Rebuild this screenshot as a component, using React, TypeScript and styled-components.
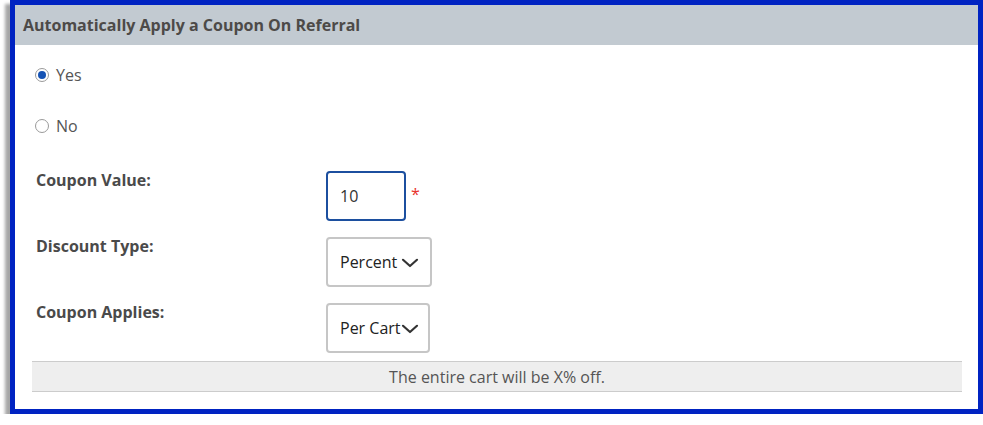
import React from 'react';
import styled, { createGlobalStyle } from 'styled-components';

const GlobalStyle = createGlobalStyle`
  html, body {
    margin: 0;
    padding: 0;
    background: #ffffff;
  }
  body {
    font-family: "Open Sans", "Noto Sans", Arial, sans-serif;
    color: #4a4a4a;
  }
`;

const Frame = styled.div`
  box-sizing: border-box;
  margin-left: 10px;
  width: 973px;
  height: 414px;
  border: 5px solid #0023c2;
  background: #ffffff;
  box-shadow: -5px 4px 3px rgba(0, 0, 0, 0.35);
  display: flex;
  flex-direction: column;
`;

const Header = styled.div`
  height: 40px;
  background: #c2cad1;
  display: flex;
  align-items: center;
  padding-left: 8px;
  font-size: 16px;
  font-weight: 700;
  color: #4d4a48;
`;

const Body = styled.div`
  display: flex;
  flex-direction: column;
  padding: 19px 16px 0 17px;
`;

const RadioRow = styled.label`
  display: flex;
  align-items: center;
  height: 22px;
  padding-left: 3px;
  margin-bottom: 29px;
  font-size: 16px;
  color: #555;
  cursor: pointer;
`;

const Radio = styled.input.attrs({ type: 'radio' })`
  appearance: none;
  box-sizing: border-box;
  width: 14px;
  height: 14px;
  margin: 0 7px 0 0;
  border-radius: 50%;
  border: 1px solid #9a9a9a;
  background: #fff;
  display: grid;
  place-items: center;

  &:checked::before {
    content: '';
    width: 8px;
    height: 8px;
    border-radius: 50%;
    background: #1653b4;
  }
`;

const Fields = styled.div`
  display: flex;
  flex-direction: column;
  gap: 16px;
  margin: 5px 0 8px;
`;

const FieldRow = styled.div`
  display: flex;
  align-items: flex-start;
  height: 50px;
`;

const Label = styled.div`
  width: 294px;
  padding-left: 4px;
  box-sizing: border-box;
  font-size: 16px;
  font-weight: 700;
  line-height: 19px;
  color: #4a4a4a;
`;

const TextInput = styled.input`
  box-sizing: border-box;
  width: 80px;
  height: 50px;
  border: 2px solid #1c4f9f;
  border-radius: 4px;
  padding: 0 12px;
  font-family: inherit;
  font-size: 16px;
  color: #333;
  outline: none;
`;

const Required = styled.span`
  color: #e8322c;
  font-size: 16px;
  margin: 12px 0 0 5px;
`;

const SelectWrap = styled.div<{ $width: number }>`
  position: relative;
  width: ${({ $width }) => $width}px;
  height: 50px;
`;

const Select = styled.select`
  box-sizing: border-box;
  appearance: none;
  width: 100%;
  height: 100%;
  border: 2px solid #c6c6c6;
  border-radius: 4px;
  background: #fff;
  padding: 0 0 0 12px;
  font-family: inherit;
  font-size: 16px;
  color: #222;
  outline: none;
`;

const Chevron = styled.svg<{ $right: number }>`
  position: absolute;
  right: ${({ $right }) => $right}px;
  top: 21px;
  pointer-events: none;
`;

const Note = styled.div`
  height: 29px;
  background: #eeeeee;
  border-top: 1px solid #cccccc;
  border-bottom: 1px solid #cccccc;
  display: flex;
  align-items: center;
  justify-content: center;
  font-size: 16px;
  color: #555;
`;

const ChevronIcon: React.FC<{ right: number }> = ({ right }) => (
  <Chevron $right={right} width="18" height="10" viewBox="0 0 18 10">
    <path d="M2 1.8 L9 8 L16 1.8" fill="none" stroke="#333" strokeWidth="2.2" strokeLinecap="round" strokeLinejoin="round" />
  </Chevron>
);

const App: React.FC = () => {
  return (
    <>
      <GlobalStyle />
      <Frame>
        <Header>Automatically Apply a Coupon On Referral</Header>
        <Body>
          <RadioRow>
            <Radio name="auto" defaultChecked />
            Yes
          </RadioRow>
          <RadioRow>
            <Radio name="auto" />
            No
          </RadioRow>

          <Fields>
            <FieldRow>
              <Label>Coupon Value:</Label>
              <TextInput defaultValue="10" />
              <Required>*</Required>
            </FieldRow>

            <FieldRow>
              <Label>Discount Type:</Label>
              <SelectWrap $width={106}>
                <Select defaultValue="percent">
                  <option value="percent">Percent</option>
                  <option value="fixed">Fixed</option>
                </Select>
                <ChevronIcon right={13} />
              </SelectWrap>
            </FieldRow>

            <FieldRow>
              <Label>Coupon Applies:</Label>
              <SelectWrap $width={104}>
                <Select defaultValue="cart">
                  <option value="cart">Per Cart</option>
                  <option value="item">Per Item</option>
                </Select>
                <ChevronIcon right={11} />
              </SelectWrap>
            </FieldRow>
          </Fields>

          <Note>The entire cart will be X% off.</Note>
        </Body>
      </Frame>
    </>
  );
};

export default App;
